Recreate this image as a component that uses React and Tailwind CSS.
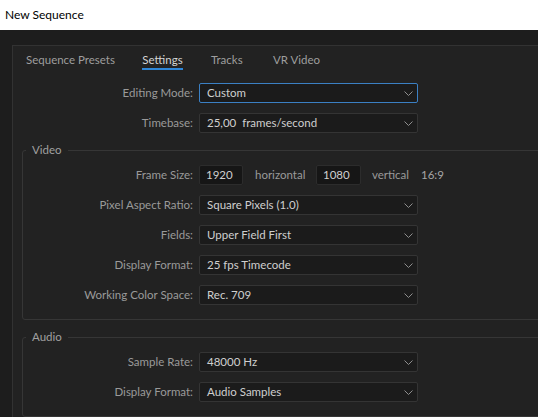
import React from "react";

const font = "font-['Lato','Noto_Sans',sans-serif]";

const Chevron = () => (
  <svg width="9" height="5" viewBox="0 0 9 5" className="shrink-0">
    <path d="M0.5 0.5 L4.5 4.5 L8.5 0.5" fill="none" stroke="#8e8e8e" strokeWidth="1" />
  </svg>
);

const Select = ({ value, active }) => (
  <div
    className={`w-[219px] h-[20px] flex items-center justify-between pl-[7px] pr-[4px] rounded-[2px] border bg-[#1b1b1b] text-[#cfcfcf] ${
      active ? "border-[#3b80c4]" : "border-[#343434]"
    }`}
  >
    <span className="whitespace-pre">{value}</span>
    <Chevron />
  </div>
);

const Row = ({ label, wide, children }) => (
  <div className="flex items-center gap-[6px] h-[20px]">
    <div className={`${wide ? "w-[180px]" : "w-[170px]"} text-right text-[#9a9a9a]`}>
      {label}
    </div>
    {children}
  </div>
);

const Group = ({ title, children, className = "" }) => (
  <fieldset
    className={`ml-[9px] w-[560px] border border-[#363636] rounded-[3px] pb-[14px] ${className}`}
  >
    <legend className="ml-[3px] px-[6px] h-[14px] leading-[14px] text-[#a0a0a0]">
      {title}
    </legend>
    <div className="mt-[8px] flex flex-col gap-[10px]">{children}</div>
  </fieldset>
);

const NumberBox = ({ value, width }) => (
  <div
    className={`${width} h-[20px] flex items-center pl-[6px] rounded-[2px] border border-[#2c2c2c] bg-[#161616] text-[#cfcfcf]`}
  >
    {value}
  </div>
);

export default function App() {
  return (
    <div className={`w-[538px] h-[417px] overflow-hidden flex flex-col text-[11.5px] ${font}`}>
      <div className="h-[30px] shrink-0 bg-white px-[5px] flex items-center text-[12px] text-black">
        New Sequence
      </div>

      <div className="flex-1 bg-[#1d1d1d] pl-[12px] pt-[15px]">
        <div className="h-full w-[600px] border-t border-l border-[#323232] bg-[#222222]">
          <div className="flex pl-[13px] pt-[6px] text-[#9e9e9e]">
            <div className="w-[116px] h-[18px] leading-[16px]">Sequence Presets</div>
            <div className="w-[69px]">
              <div className="w-[41px] h-[18px] leading-[16px] text-center text-[#d4d4d4] border-b-2 border-[#2f87d8]">
                Settings
              </div>
            </div>
            <div className="w-[62px] h-[18px] leading-[16px]">Tracks</div>
            <div className="h-[18px] leading-[16px]">VR Video</div>
          </div>

          <div className="mt-[13px] flex flex-col gap-[10px]">
            <Row label="Editing Mode:" wide>
              <Select value="Custom" active />
            </Row>
            <Row label="Timebase:" wide>
              <Select value="25,00  frames/second" />
            </Row>
          </div>

          <Group title="Video" className="mt-[10px]">
            <Row label="Frame Size:">
              <div className="flex items-center">
                <NumberBox value="1920" width="w-[44px]" />
                <span className="w-[73px] pl-[12px] text-[#9a9a9a]">horizontal</span>
                <NumberBox value="1080" width="w-[45px]" />
                <span className="w-[60px] pl-[11px] text-[#9a9a9a]">vertical</span>
                <span className="text-[#a6a6a6]">16:9</span>
              </div>
            </Row>
            <Row label="Pixel Aspect Ratio:">
              <Select value="Square Pixels (1.0)" />
            </Row>
            <Row label="Fields:">
              <Select value="Upper Field First" />
            </Row>
            <Row label="Display Format:">
              <Select value="25 fps Timecode" />
            </Row>
            <Row label="Working Color Space:">
              <Select value="Rec. 709" />
            </Row>
          </Group>

          <Group title="Audio" className="mt-[10px]">
            <Row label="Sample Rate:">
              <Select value="48000 Hz" />
            </Row>
            <Row label="Display Format:">
              <Select value="Audio Samples" />
            </Row>
          </Group>
        </div>
      </div>
    </div>
  );
}
